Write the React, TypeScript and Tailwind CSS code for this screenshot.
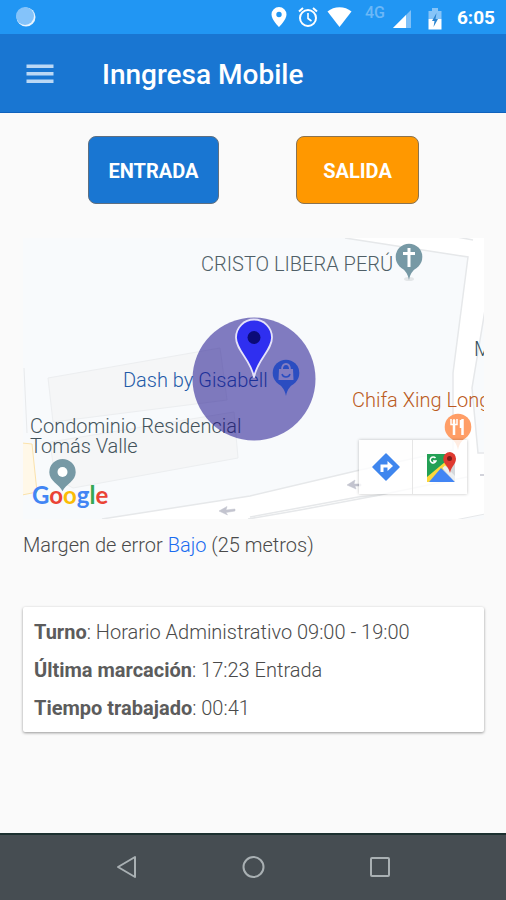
import React from 'react'

function StatusBar() {
  return (
    <div className="flex h-[34px] items-center bg-[#2196f3] pl-4 pr-[11px] text-white">
      <svg width="20" height="20" viewBox="0 0 20 20">
        <circle cx="10" cy="10" r="9.500" fill="#e8f4fe" />
        <circle cx="9" cy="9" r="9" fill="#84c3fa" />
      </svg>
      <div className="ml-auto flex items-center">
        <svg width="16" height="20" viewBox="0 0 16 20" fill="currentColor">
          <path
            fillRule="evenodd"
            d="M8 0a7.5 7.5 0 0 0-7.5 7.5C.5 13 8 20 8 20s7.500-7 7.500-12.500A7.500 7.500 0 0 0 8 0zm0 4.800a2.700 2.700 0 1 1 0 5.400 2.700 2.700 0 0 1 0-5.400z"
          />
        </svg>
        <svg className="ml-[11px]" width="20" height="20" viewBox="0 0 20 20" fill="none" stroke="currentColor">
          <circle cx="10" cy="11" r="8" strokeWidth="2" />
          <path d="M1 4.500L5 1M19 4.500L15 1" strokeWidth="2" />
          <path d="M10 6v5.500l3.500 2.500" strokeWidth="1.600" />
        </svg>
        <svg className="ml-[9px]" width="25" height="20" viewBox="0 0 25 20" fill="currentColor">
          <path d="M0.500 4.500C7-1.200 18-1.200 24.500 4.500L12.500 20z" />
        </svg>
        <span className="mb-2 ml-[13px] text-[16px] font-medium leading-5 text-[#6cb8f7]">4G</span>
        <svg className="ml-2 mt-1" width="18" height="18" viewBox="0 0 18 18">
          <path d="M18 0v18H0z" fill="#7ec0f8" />
          <path d="M13 5v13H0z" fill="#fff" />
        </svg>
        <svg className="ml-[17px] mt-1" width="14" height="22" viewBox="0 0 14 22">
          <path d="M4 0h6v3h3.500v8H.5V3H4z" fill="#86c4f8" />
          <path d="M.5 11h13v10.500H.5z" fill="#fff" />
          <path d="M8.500 5L4 13h2.500l-1 6L10 11H7.500z" fill="#2b84d0" />
        </svg>
        <span className="ml-[15px] mt-0.5 text-[19px] font-bold leading-6">6:05</span>
      </div>
    </div>
  )
}

function Header() {
  return (
    <header className="flex h-[79px] items-center border-b border-[#0f62bd] bg-[#1976d2] px-[26px] pt-0.5">
      <button type="button" aria-label="Menú" className="flex h-7 w-7 items-center">
        <svg width="28" height="20" viewBox="0 0 28 20" fill="#bbd8f5">
          <path d="M0.500 0.500h27V4h-27zM0.500 8h27v3.500h-27zM0.500 15.500h27V19h-27z" />
        </svg>
      </button>
      <h1 className="ml-12 mt-0.5 text-[28px] font-medium leading-8 text-white">Inngresa Mobile</h1>
    </header>
  )
}

function PinShape({ x, y, color }: { x: number; y: number; color: string }) {
  return (
    <g fill={color}>
      <circle cx={x} cy={y} r="13.300" />
      <path d={`M${x - 10} ${y + 8}C${x - 5} ${y + 13} ${x - 1.5} ${y + 15} ${x} ${y + 23}C${x + 1.5} ${y + 15} ${x + 5} ${y + 13} ${x + 10} ${y + 8}z`} />
    </g>
  )
}

function MapBase() {
  return (
    <svg className="absolute left-0 top-0" width="461" height="281" viewBox="0 0 461 281">
      <rect width="461" height="281" fill="#fff" />
      <path d="M0 0H322L445 19L430 135V212L337 232L227 258L79 281H0z" fill="#f8fafc" />
      <g fill="none" stroke="#e6e8ea" strokeWidth="1.500">
        <path d="M322 0L445 19L430 135V212L337 232L227 258L79 281" />
        <path d="M434 -1L450 2" />
        <path d="M227 279L335 259L357 257L444 239" />
        <path d="M225 281L277 272L357 257" />
      </g>
      <path d="M462 72L449 150L455 215H462z" fill="#f8fafc" stroke="#e6e8ea" strokeWidth="1.500" />
      <path d="M432 282L462 276V282z" fill="#f8fafc" stroke="#e6e8ea" />
      <g fill="#f5f6f7" stroke="#eceef0">
        <path d="M25 140L197 110L204 162L30 184z" />
        <path d="M27 204L211 174L215 220L50 250L32 240z" />
      </g>
      <path d="M1 130L4 195" stroke="#e8eaec" />
      <path d="M-1 205L9 206L14 254L-1 257z" fill="#fff8e8" stroke="#fbe2ab" />
      <g fill="#c3c4cf" stroke="#c3c4cf" strokeWidth="1.500">
        <path d="M324 247L332 242L331 246H338V248H332L333 251z" strokeWidth="0.500" />
        <path d="M196 273L204 268.500L203 272L212 271V273L203 274.500L204.500 277z" strokeWidth="0.500" />
        <path d="M457 237H461" />
      </g>

      {/* church */}
      <ellipse cx="386" cy="41" rx="5" ry="2" fill="#e3e6e8" />
      <PinShape x={386} y={19} color="#7799a5" />
      <path d="M386 10V29M380 15.500H392" stroke="#fff" strokeWidth="3" />

      {/* shop */}
      <PinShape x={263} y={135} color="#3f96fe" />
      <path d="M256 131h14l.5 11h-15z" fill="#fff" />
      <path d="M259 132c0-8 8-8 8 0" fill="none" stroke="#fff" strokeWidth="1.800" />
      <path d="M259 136c1 4 7 4 8 0" fill="none" stroke="#3f96fe" strokeWidth="1.500" />

      {/* restaurant */}
      <PinShape x={435} y={189} color="#ff9e67" />
      <g fill="none" stroke="#fff">
        <path d="M431 182V197" strokeWidth="2.500" />
        <path d="M428 181V186.500H434V181M431 181V186" strokeWidth="1.500" />
        <path d="M439.500 181V197" strokeWidth="2.500" />
        <path d="M438 182V190" strokeWidth="2.500" />
      </g>

      {/* condominium */}
      <path d="M39.500 221a13.200 13.200 0 0 0-13.200 13.200c0 9 10 12 13.200 19c3.200-7 13.200-10 13.200-19A13.200 13.200 0 0 0 39.500 221z" fill="#7799a5" />
      <circle cx="39.500" cy="234" r="5" fill="#fff" />
    </svg>
  )
}

function MapOverlay() {
  return (
    <svg className="absolute left-0 top-0" width="461" height="281" viewBox="0 0 461 281">
      <circle cx="231" cy="141" r="61.500" fill="#1a0f8c" fillOpacity="0.540" />
      <path
        d="M231 81.500a18 18 0 0 0-18 18c0 13 15 22 18 40c3-18 18-27 18-40A18 18 0 0 0 231 81.500z"
        fill="#2f2ff0"
        stroke="#e4e2fa"
        strokeWidth="1.800"
      />
      <circle cx="231" cy="99.500" r="6.500" fill="#0b0b78" />
    </svg>
  )
}

function MapView() {
  return (
    <section aria-label="Mapa" className="relative mt-[34px] h-[281px] overflow-hidden bg-white">
      <MapBase />
      <div className="whitespace-nowrap text-[20px] font-light leading-5">
        <p className="absolute left-[178px] top-4 text-[#4f5f67]">CRISTO LIBERA PERÚ</p>
        <p className="absolute left-[100px] top-[132px] text-[#1f5ba8]">Dash by Gisabell</p>
        <p className="absolute left-[329px] top-[152px] text-[#bb5a22]">Chifa Xing Long</p>
        <p className="absolute left-[451px] top-[101px] text-[#37525e]">M</p>
        <p className="absolute left-[7px] top-[178px] text-[#43535b]">
          Condominio Residencial
          <br />
          Tomás Valle
        </p>
      </div>
      <MapOverlay />
      <p className="absolute left-[9px] top-[241px] font-['Lato',sans-serif] text-[24px] font-bold leading-8">
        <span className="text-[#4285f4]">G</span>
        <span className="text-[#ea4335]">o</span>
        <span className="text-[#fbbc05]">o</span>
        <span className="text-[#4285f4]">g</span>
        <span className="text-[#34a853]">l</span>
        <span className="text-[#ea4335]">e</span>
      </p>
      <div className="absolute left-[336px] top-[202px] flex divide-x divide-[#e6e6e6] bg-white/80 shadow-[0_0_3px_rgba(0,0,0,0.25)]">
        <button type="button" aria-label="Cómo llegar" className="flex h-[54px] w-[54px] items-center justify-center">
          <svg width="28" height="28" viewBox="0 0 28 28">
            <path d="M14 1L27 14L14 27L1 14z" fill="#3f86ee" stroke="#3f86ee" strokeWidth="1.500" strokeLinejoin="round" />
            <path d="M10 19V13H16" fill="none" stroke="#fff" strokeWidth="3" />
            <path d="M15.500 8L21 13L15.500 18z" fill="#fff" />
          </svg>
        </button>
        <button type="button" aria-label="Abrir en Google Maps" className="flex h-[54px] w-[54px] items-center justify-center">
          <svg width="32" height="32" viewBox="0 0 32 32">
            <path d="M3 3H31V31H3z" fill="#d5d8db" />
            <path d="M3 3H26L20 16L3 31z" fill="#23a055" />
            <path d="M3 26L21 11L24 14L7 31H3z" fill="#fdd73b" />
            <path d="M17 17L31 31H5z" fill="#4285f4" />
            <path d="M18.500 17L21 14.500L31 25V31z" fill="#eceff1" />
            <path d="M11.500 7A3 3 0 1 0 12 10H9" fill="none" stroke="#fff" strokeWidth="1.500" />
            <path d="M26 1a6.800 6.800 0 0 0-6.800 6.800C19.200 13 24.500 15 26 22c1.500-7 6-9 6-14.200A6.800 6.800 0 0 0 26 1z" fill="#df3a30" />
            <circle cx="25.500" cy="7.500" r="2.500" fill="#7d1d18" />
          </svg>
        </button>
      </div>
    </section>
  )
}

function Summary() {
  return (
    <section className="mt-12 rounded-xs bg-white px-[11px] pb-[5px] pt-1.5 text-[20px] font-light leading-[38px] text-[#4a4a4a] shadow-[0_1px_3px_rgba(0,0,0,0.4)]">
      <p>
        <b className="font-bold text-[#5c5c5c]">Turno</b>: Horario Administrativo 09:00 - 19:00
      </p>
      <p>
        <b className="font-bold text-[#5c5c5c]">Última marcación</b>: 17:23 Entrada
      </p>
      <p>
        <b className="font-bold text-[#5c5c5c]">Tiempo trabajado</b>: 00:41
      </p>
    </section>
  )
}

function NavBar() {
  return (
    <nav className="flex h-[67px] items-center justify-center gap-[103px] border-t-2 border-[#1c3030] bg-[#464d52] pb-0.5">
      <button type="button" aria-label="Atrás">
        <svg width="24" height="24" viewBox="0 0 24 24" fill="none" stroke="#a9b0b3" strokeWidth="2" strokeLinejoin="round">
          <path d="M21 2V22L4 12z" />
        </svg>
      </button>
      <button type="button" aria-label="Inicio">
        <svg width="24" height="24" viewBox="0 0 24 24" fill="none" stroke="#a9b0b3" strokeWidth="2">
          <circle cx="12.500" cy="12" r="10" />
        </svg>
      </button>
      <button type="button" aria-label="Recientes">
        <svg width="24" height="24" viewBox="0 0 24 24" fill="none" stroke="#a9b0b3" strokeWidth="2">
          <rect x="3" y="3" width="18" height="18" rx="1" />
        </svg>
      </button>
    </nav>
  )
}

export default function App() {
  return (
    <div className="flex min-h-screen flex-col bg-[#fafafa] font-['Roboto',sans-serif]">
      <StatusBar />
      <Header />
      <main className="flex-1 pl-[23px] pr-[22px] pt-[23px]">
        <div className="flex justify-between px-[65px] text-[20px] font-bold text-white">
          <button type="button" className="h-[68px] w-[131px] rounded-lg border border-[#5f6f80] bg-[#1976d2] pt-0.5">
            ENTRADA
          </button>
          <button type="button" className="h-[68px] w-[123px] rounded-lg border border-[#8a7350] bg-[#ff9800] pt-0.5">
            SALIDA
          </button>
        </div>
        <MapView />
        <p className="mt-3 text-[20px] font-light leading-7 text-[#4a4a4a]">
          Margen de error <span className="text-[#1a6cf0]">Bajo</span> (25 metros)
        </p>
        <Summary />
      </main>
      <NavBar />
    </div>
  )
}
